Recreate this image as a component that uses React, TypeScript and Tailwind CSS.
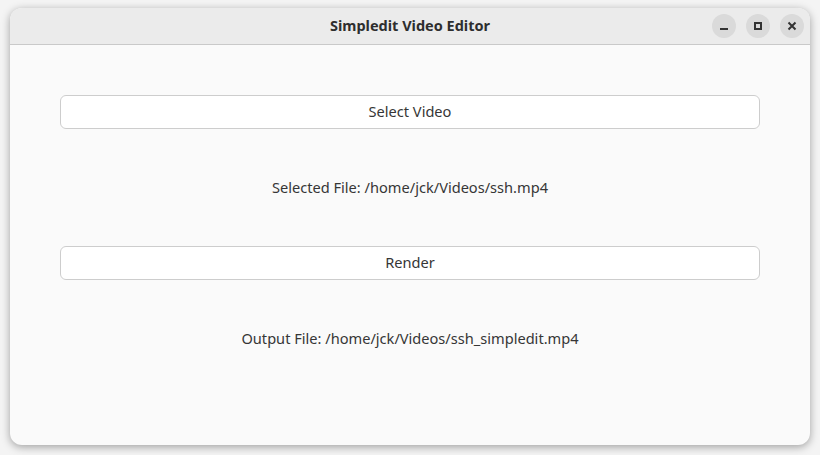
import React from "react";

export default function App() {
  const font = { fontFamily: '"Noto Sans", "Open Sans", sans-serif' };
  return (
    <div className="w-[820px] h-[455px] bg-[#f4f4f4] pt-[8px] px-[10px] overflow-hidden" style={font}>
      <div className="w-[800px] h-[437px] rounded-[12px] bg-[#fafafa] shadow-[0_2px_8px_rgba(0,0,0,0.35)] flex flex-col overflow-hidden">
        <div className="h-[37px] shrink-0 bg-[#ebebeb] border-b border-[#c9c9c9] flex items-center relative">
          <div className="flex-1 text-center text-[14.5px] font-bold text-[#2e2e2e]">Simpledit Video Editor</div>
          <div className="absolute right-[6px] top-[6px] flex gap-[10px]">
            <div className="w-[24px] h-[24px] rounded-full bg-[#dadada] flex items-center justify-center">
              <div className="w-[8px] h-[2px] bg-[#333] mt-[5px]" />
            </div>
            <div className="w-[24px] h-[24px] rounded-full bg-[#dadada] flex items-center justify-center">
              <div className="w-[8px] h-[8px] border-[2px] border-[#333]" />
            </div>
            <div className="w-[24px] h-[24px] rounded-full bg-[#dadada] flex items-center justify-center">
              <svg width="10" height="10" viewBox="0 0 10 10">
                <path d="M1.5 1.5 L8.5 8.5 M8.5 1.5 L1.5 8.5" stroke="#333" strokeWidth="2" />
              </svg>
            </div>
          </div>
        </div>
        <div className="flex flex-col px-[50px] pt-[50px] text-[14.6px] text-[#363636]">
          <div className="h-[34px] bg-white border border-[#cdcdcd] rounded-[6px] flex items-center justify-center">Select Video</div>
          <div className="h-[117px] flex items-center justify-center">Selected File: /home/jck/Videos/ssh.mp4</div>
          <div className="h-[34px] bg-white border border-[#cdcdcd] rounded-[6px] flex items-center justify-center">Render</div>
          <div className="h-[117px] flex items-center justify-center">Output File: /home/jck/Videos/ssh_simpledit.mp4</div>
        </div>
      </div>
    </div>
  );
}
